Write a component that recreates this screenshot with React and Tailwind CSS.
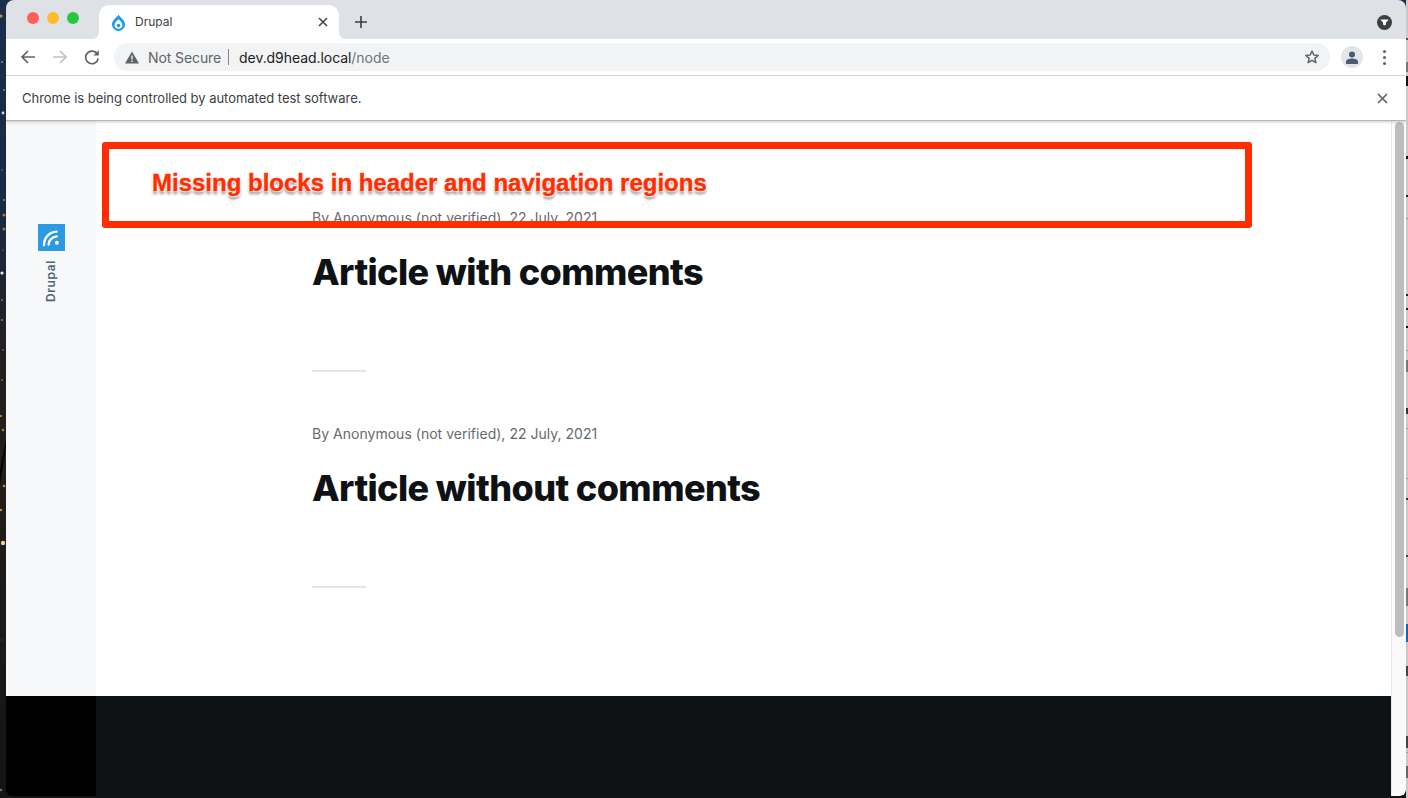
import React from "react";

const UI = "font-['Inter','Liberation_Sans',sans-serif]";

function Stars() {
  const s = [[1,16,"#c98a4a",1.6],[3,113,"#cfd6e6",1.4],[4,200,"#8a8f9a",1],[4,215,"#b0703a",1.6],[4,229,"#a8702c",1.6],[2,273,"#e4e8f0",1.6],[2,320,"#8a8078",1],[1,416,"#b08040",1.2],[3,430,"#b08048",1.2],[4,486,"#c48a3c",1.3],[1,510,"#c09050",1.2],[3,543,"#f0d090",2.2],[2,62,"#7d93b8",0.9],[4,90,"#7d93b8",0.9],[2,170,"#7b8190",0.8],[3,250,"#706860",0.8],[2,300,"#8c7a68",1],[3,350,"#6c6256",0.9],[2,380,"#7c6a58",1],[2,640,"#4c4c4c",0.7],[1,790,"#a07040",1.2]];
  return (
    <svg width="6" height="798" className="block">
      <path d="M6 445 L0 485 L0 470 L6 440Z" fill="#000" />
      {s.map(([x, y, c, r], i) => <circle key={i} cx={x} cy={y} r={r} fill={c} />)}
    </svg>
  );
}

function RightStrip() {
  const m = [[38,2,"#555"],[62,10,"#777"],[76,10,"#111"],[156,3,"#111"],[195,2,"#222"],[218,1,"#999"],[294,2,"#222"],[308,2,"#222"],[326,2,"#111"],[350,1,"#999"],[360,12,"#777"],[408,6,"#333"],[428,1,"#999"],[478,1,"#999"],[498,2,"#333"],[555,2,"#444"],[588,18,"#777"],[624,18,"#1463c9"],[666,10,"#444"],[736,12,"#444"],[752,1,"#999"],[766,12,"#666"]];
  return (
    <div className="relative w-[2px] h-[798px] bg-[#c9c9c9] overflow-hidden">
      {m.map(([t, h, c], i) => (
        <div key={i} className="absolute left-0 w-[2px]" style={{ top: t, height: h, background: c }} />
      ))}
    </div>
  );
}

function DrupalDrop() {
  return (
    <svg width="15" height="17" viewBox="0 0 15 17" fill="none">
      <path d="M7.5 0.6 C8.5 3 14 6 14 10.4 A6.5 6.5 0 0 1 1 10.4 C1 6 6.5 3 7.5 0.6Z" fill="#1c9ce6" />
      <path d="M7.5 5.2 C8.5 6.4 11.4 8.2 11.4 10.8 A3.9 3.9 0 0 1 3.6 10.8 C3.6 8.2 6.5 6.4 7.5 5.2Z" fill="#fff" />
      <circle cx="7.5" cy="11.6" r="1.8" fill="#1c9ce6" />
    </svg>
  );
}

function TabBar() {
  return (
    <div className="flex h-[39px] bg-[#dee1e6] shrink-0">
      <div className="flex items-center gap-[8px] pl-[21px] w-[93px] pb-[3px]">
        <span className="w-[12px] h-[12px] rounded-full bg-[#fe5f57]" />
        <span className="w-[12px] h-[12px] rounded-full bg-[#febb2e]" />
        <span className="w-[12px] h-[12px] rounded-full bg-[#27c83f]" />
      </div>
      <div className="relative mt-[5px] w-[240px] h-[34px] bg-white rounded-t-[10px] flex items-center pl-[12px] pr-[11px]">
        <svg className="absolute left-[-7px] bottom-0" width="7" height="7" viewBox="0 0 7 7"><path d="M7 0V7H0C4 7 7 4 7 0Z" fill="#fff" /></svg>
        <svg className="absolute right-[-7px] bottom-0" width="7" height="7" viewBox="0 0 7 7"><path d="M0 0V7H7C3 7 0 4 0 0Z" fill="#fff" /></svg>
        <DrupalDrop />
        <span className={`ml-[9px] text-[12px] leading-[16px] text-[#3c4043] ${UI}`}>Drupal</span>
        <svg className="ml-auto" width="10" height="10" viewBox="0 0 10 10"><path d="M1 1L9 9M9 1L1 9" stroke="#45494e" strokeWidth="1.6" /></svg>
      </div>
      <div className="ml-[16px] mt-[5px] flex items-center">
        <svg width="12" height="12" viewBox="0 0 12 12"><path d="M6 0V12M0 6H12" stroke="#3c4043" strokeWidth="1.6" /></svg>
      </div>
      <div className="ml-auto mr-[14px] mt-[5px] flex items-center">
        <span className="w-[15px] h-[15px] rounded-full bg-[#3c4043] flex items-center justify-center">
          <svg width="9" height="7" viewBox="0 0 9 7"><path d="M0.2 0.4H8.8L6 3.5V5.6L4.5 6.6L3 5.6V3.5Z" fill="#fff" /></svg>
        </span>
      </div>
    </div>
  );
}

function Toolbar() {
  return (
    <div className="flex items-center h-[37px] bg-white border-b border-[#dadce0] shrink-0">
      <div className="flex items-center w-[108px] pl-[14px] gap-[16px]">
        <svg width="16" height="16" viewBox="0 0 16 16" fill="none"><path d="M15 8H2M8 2L2 8L8 14" stroke="#5f6368" strokeWidth="1.7" /></svg>
        <svg width="16" height="16" viewBox="0 0 16 16" fill="none"><path d="M1 8H14M8 2L14 8L8 14" stroke="#bdc1c6" strokeWidth="1.7" /></svg>
        <svg width="16" height="16" viewBox="0 0 16 16" fill="none"><path d="M13.4 5.2A6.3 6.3 0 1 0 14.2 9.4" stroke="#5f6368" strokeWidth="1.7" /><path d="M14.8 1.2V6.6H9.4Z" fill="#5f6368" /></svg>
      </div>
      <div className={`flex items-center w-[1216px] h-[28px] rounded-full bg-[#f1f3f4] pl-[11px] pr-[10px] ${UI}`}>
        <svg width="14" height="13" viewBox="0 0 14 13"><path d="M7 0.5L14 12.5H0Z" fill="#5f6368" /><path d="M6.3 4.6H7.7V8.6H6.3ZM6.3 9.6H7.7V11H6.3Z" fill="#f1f3f4" /></svg>
        <span className="ml-[9px] text-[14px] tracking-[-0.1px] text-[#5f6368]">Not Secure</span>
        <span className="ml-[7px] w-px h-[16px] bg-[#80868b]" />
        <span className="ml-[10px] text-[14px] tracking-[-0.06px] text-[#202124]">dev.d9head.local<span className="text-[#70757a]">/node</span></span>
        <svg className="ml-auto" width="16" height="16" viewBox="0 0 24 24" fill="none"><path d="M12 3l2.7 6.1 6.6.6-5 4.4 1.5 6.5L12 17.2l-5.8 3.4 1.5-6.5-5-4.4 6.6-.6Z" stroke="#5f6368" strokeWidth="2.2" strokeLinejoin="round" /></svg>
      </div>
      <span className="ml-[11px] w-[22px] h-[22px] rounded-full bg-[#e2e5ea] flex items-center justify-center">
        <svg width="12" height="13" viewBox="0 0 12 13"><circle cx="6" cy="3.4" r="3" fill="#4c5a73" /><path d="M0 13V11C0 8.6 3 7.6 6 7.6S12 8.6 12 11V13Z" fill="#4c5a73" /></svg>
      </span>
      <span className="ml-[20px] flex flex-col gap-[3px]">
        <span className="w-[3px] h-[3px] rounded-full bg-[#5f6368]" />
        <span className="w-[3px] h-[3px] rounded-full bg-[#5f6368]" />
        <span className="w-[3px] h-[3px] rounded-full bg-[#5f6368]" />
      </span>
    </div>
  );
}

function InfoBar() {
  return (
    <div className={`relative z-10 flex items-center h-[45px] pl-[16px] pr-[18px] bg-white border-b border-[#b5b5b5] shadow-[0_1px_3px_rgba(0,0,0,0.2)] shrink-0 ${UI}`}>
      <span className="pt-[1px] text-[13px] tracking-[-0.02px] text-[#3c4043]">Chrome is being controlled by automated test software.</span>
      <svg className="ml-auto" width="11" height="11" viewBox="0 0 11 11"><path d="M1 1L10 10M10 1L1 10" stroke="#5f6368" strokeWidth="1.7" /></svg>
    </div>
  );
}

function Article({ title }) {
  return (
    <article className="h-[216px] pl-[216px] flex flex-col">
      <p className="text-[14px] leading-[20px] tracking-[0.02px] text-[#666a6d] font-['Inter',sans-serif]">By Anonymous (not verified), 22 July, 2021</p>
      <h2 className="mt-[22px] text-[36px] leading-[44px] font-extrabold text-[#0e1215] font-['Inter',sans-serif] tracking-[-0.6px]">{title}</h2>
      <div className="mt-[76px] w-[54px] h-[2px] shrink-0 bg-[#e4e6e8]" />
    </article>
  );
}

function Content() {
  return (
    <div className="flex flex-1 min-h-0">
      <div className="w-[90px] flex flex-col shrink-0">
        <div className="flex-1 bg-[#f6f8fa] flex flex-col items-center pt-[103px]">
          <span className="w-[27px] h-[27px] bg-[#2b9ae0] flex items-center justify-center">
            <svg width="19" height="19" viewBox="0 0 19 19" fill="none">
              <path d="M2 17C2 9.5 7.5 4 14.5 3.6" stroke="#fff" strokeWidth="2.4" strokeLinecap="round" />
              <path d="M6.6 16.5C6.6 12.5 10 8.8 14.8 8.4" stroke="#fff" strokeWidth="2.4" strokeLinecap="round" />
              <circle cx="14.8" cy="14.8" r="2" fill="#fff" />
            </svg>
          </span>
          <span className={`mt-[9px] [writing-mode:vertical-rl] rotate-180 text-[12px] font-semibold tracking-[0.6px] text-[#4f6479] ${UI}`}>Drupal</span>
        </div>
        <div className="h-[100px] bg-black rounded-bl-[6px]" />
      </div>
      <div className="flex-1 flex flex-col min-w-0">
        <main className="flex-1 bg-white pt-[87px]">
          <Article title="Article with comments" />
          <Article title="Article without comments" />
        </main>
        <div className="h-[100px] bg-[#0f1214]" />
      </div>
      <div className="w-[15px] bg-[#fafafa] border-l border-[#e8e8e8] pl-[3px] pt-[1px] rounded-br-[6px]">
        <div className="w-[9px] h-[515px] rounded-full bg-[#bdbdbd]" />
      </div>
    </div>
  );
}

export default function App() {
  return (
    <div className="relative flex w-[1408px] h-[798px] overflow-hidden bg-[linear-gradient(180deg,#1c2d4c_0%,#1a2a44_25%,#241f20_45%,#231d18_60%,#1a1a1a_80%,#141414_100%)]">
      <div className="w-[6px] shrink-0"><Stars /></div>
      <div className="w-[1400px] h-[796px] flex flex-col rounded-b-[6px] rounded-t-[8px] overflow-hidden">
        <TabBar />
        <Toolbar />
        <InfoBar />
        <Content />
      </div>
      <RightStrip />
      <div className="absolute left-[102px] top-[142px] w-[1150px] h-[86px] border-[7px] border-[#ff2d00] rounded-[3px] flex items-center pl-[43px] pb-[5px]">
        <span className="font-['Liberation_Sans',sans-serif] font-bold text-[24px] text-[#ff2d00] [-webkit-text-stroke:0.4px_#ff2d00] [text-shadow:0_0_2px_#fff,0_0_2px_#fff,0_0_2px_#fff,1px_1px_1px_#fff,-1px_-1px_1px_#fff,0_3px_3px_rgba(0,0,0,0.5)]">Missing blocks in header and navigation regions</span>
      </div>
    </div>
  );
}
